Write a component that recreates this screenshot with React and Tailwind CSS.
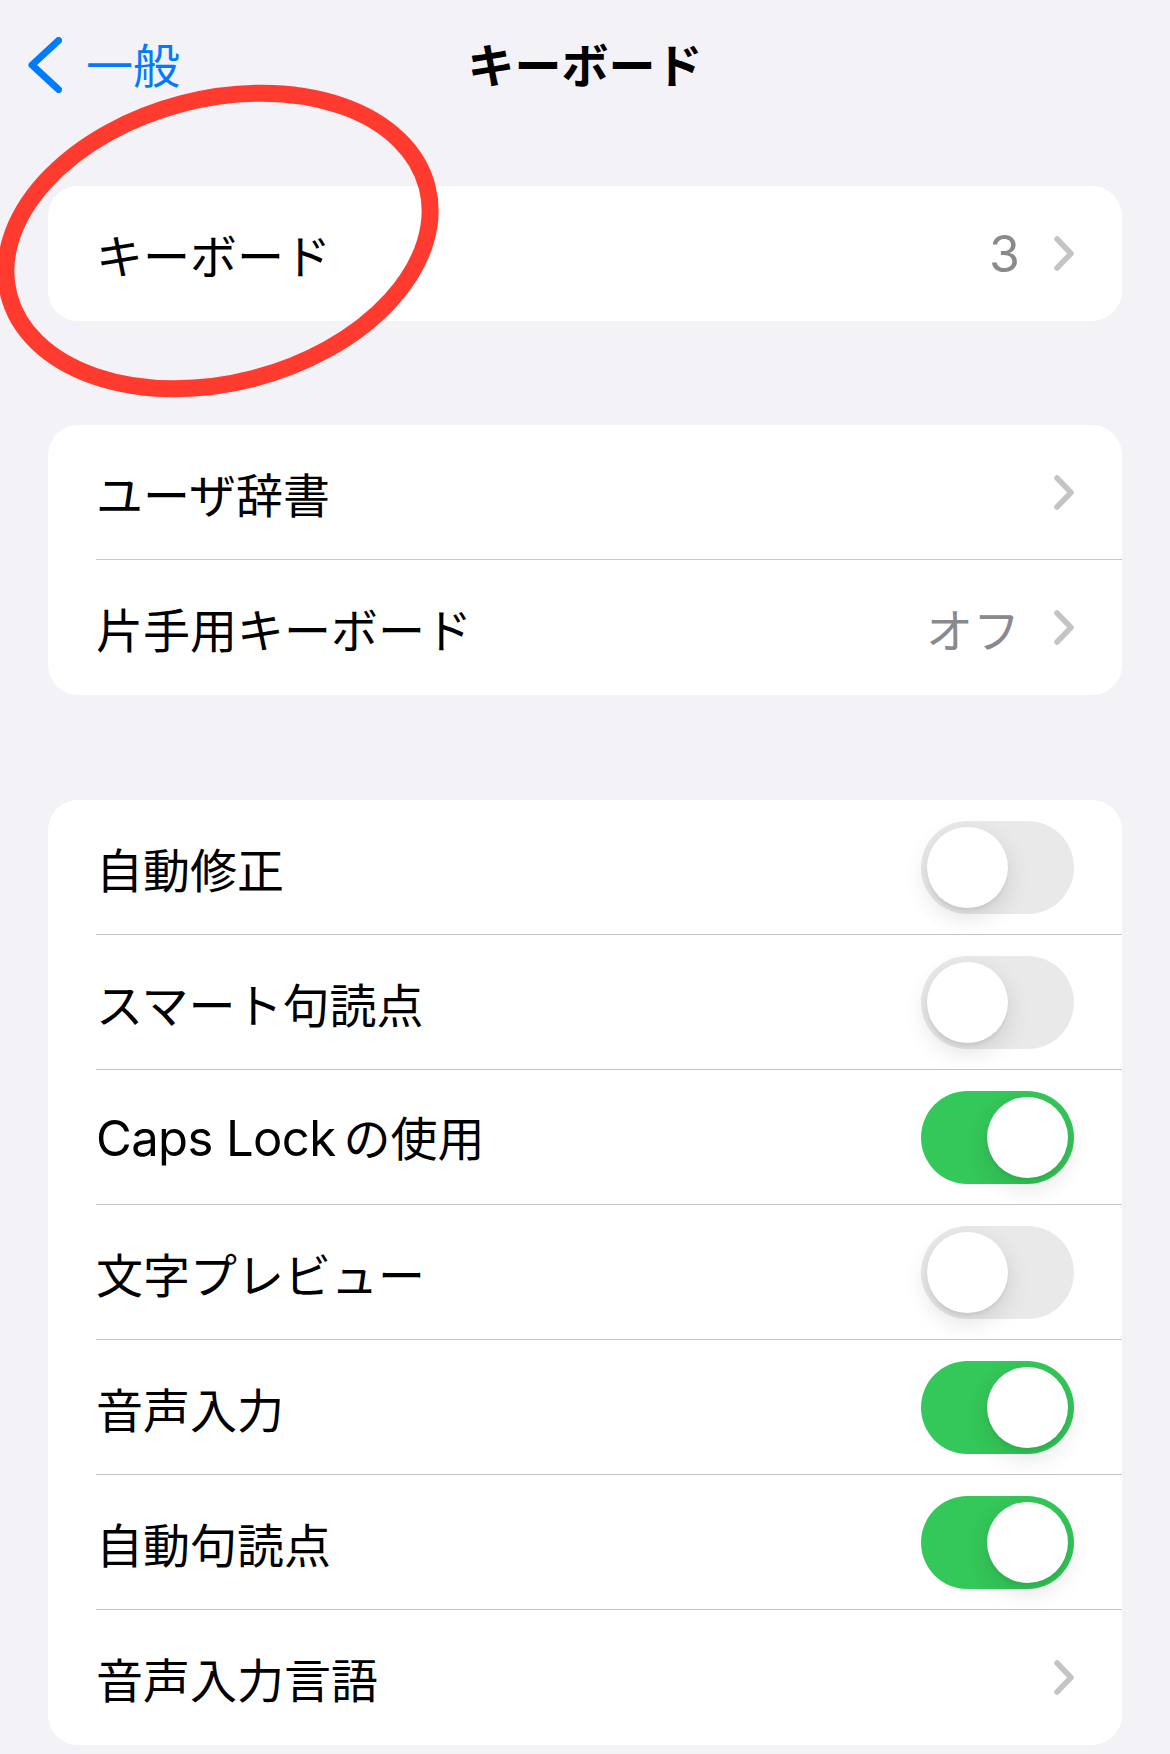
import React from "react";

const jp = "font-['Noto_Sans_CJK_JP',sans-serif]";

function Chevron() {
  return (
    <svg width="20" height="35" viewBox="0 0 20 35" className="ml-[34px] shrink-0">
      <path
        d="M3 3 L17 17.5 L3 32"
        fill="none"
        stroke="#c4c4c6"
        strokeWidth="5.5"
        strokeLinecap="round"
        strokeLinejoin="round"
      />
    </svg>
  );
}

function Toggle({ on }) {
  return (
    <div
      className={
        "w-[153px] h-[93px] rounded-full p-[6px] flex shrink-0 " +
        (on ? "bg-[#34c759] justify-end" : "bg-[#e9e9ea] justify-start")
      }
    >
      <div className="w-[81px] h-[81px] rounded-full bg-white shadow-[0_9px_24px_rgba(0,0,0,0.12),0_3px_3px_rgba(0,0,0,0.05)]" />
    </div>
  );
}

function Row({ label, value, chevron, toggle, last }) {
  return (
    <div className="h-[135px] pl-[48px] flex">
      <div
        className={
          "flex-1 flex items-center pr-[48px] " +
          (last ? "" : "border-b border-[#c6c6c8]")
        }
      >
        <div className={"flex-1 text-[47px] leading-none text-black " + jp}>{label}</div>
        {value && (
          <span className={"text-[47px] leading-none text-[#8a8a8e] " + jp}>{value}</span>
        )}
        {chevron && <Chevron />}
        {toggle !== undefined && <Toggle on={toggle} />}
      </div>
    </div>
  );
}

function Card({ children, className = "" }) {
  return <div className={"bg-white rounded-[30px] overflow-hidden " + className}>{children}</div>;
}

export default function App() {
  return (
    <div className="relative min-h-[1754px] w-[1170px] bg-[#f2f2f7]">
      {/* nav bar */}
      <div className="h-[125px] grid grid-cols-[1fr_auto_1fr] items-center">
        <div className="flex items-center pl-[28px]">
          <svg width="34" height="56" viewBox="0 0 34 56" className="mt-[4px]">
            <path
              d="M30.5 3.5 L4 28 L30.5 52.5"
              fill="none"
              stroke="#007aff"
              strokeWidth="7"
              strokeLinecap="round"
              strokeLinejoin="round"
            />
          </svg>
          <span className={"ml-[24px] text-[47px] leading-none text-[#007aff] " + jp}>一般</span>
        </div>
        <div className={"text-[47px] leading-none font-bold text-black " + jp}>キーボード</div>
        <div />
      </div>

      <div className="px-[48px] pt-[61px] flex flex-col">
        <Card>
          <Row
            label="キーボード"
            value={<span className="font-['Inter',sans-serif] text-[50px]">3</span>}
            chevron
            last
          />
        </Card>

        <Card className="mt-[104px]">
          <Row label="ユーザ辞書" chevron />
          <Row label="片手用キーボード" value="オフ" chevron last />
        </Card>

        <Card className="mt-[105px]">
          <Row label="自動修正" toggle={false} />
          <Row label="スマート句読点" toggle={false} />
          <Row
            label={
              <>
                <span className="font-['Inter',sans-serif] text-[49px] tracking-[-0.6px]">Caps Lock</span>
                <span className="ml-[8px]">の使用</span>
              </>
            }
            toggle={true}
          />
          <Row label="文字プレビュー" toggle={false} />
          <Row label="音声入力" toggle={true} />
          <Row label="自動句読点" toggle={true} />
          <Row label="音声入力言語" chevron last />
        </Card>
      </div>

      {/* red hand-drawn annotation */}
      <svg
        className="absolute left-0 top-0 pointer-events-none"
        width="460"
        height="420"
        viewBox="0 0 460 420"
      >
        <ellipse
          cx="218"
          cy="241"
          rx="216"
          ry="142"
          transform="rotate(-14.5 218 241)"
          fill="none"
          stroke="#ff3b30"
          strokeWidth="17"
        />
      </svg>
    </div>
  );
}
